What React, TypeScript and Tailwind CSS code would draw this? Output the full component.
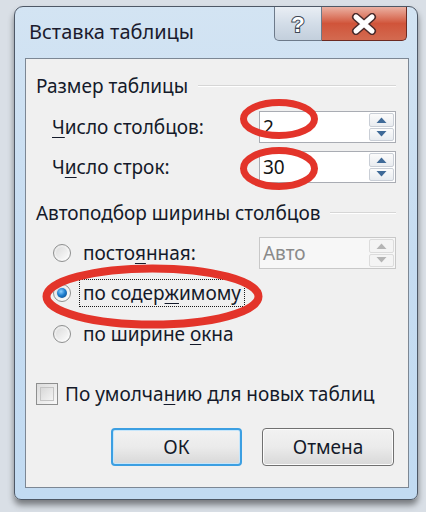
import React from "react";

const font = { fontFamily: '"Noto Sans", "Open Sans", sans-serif' };

function U({ children }: { children: React.ReactNode }) {
  return <span className="underline underline-offset-[3px] decoration-1">{children}</span>;
}

function SpinBox({ value, disabled }: { value: string; disabled?: boolean }) {
  return (
    <div
      className={`flex h-[32px] w-[137px] border ${
        disabled ? "border-[#c8c8c8] bg-[#f7f7f7]" : "border-[#a9acb3] bg-white"
      }`}
    >
      <div
        className={`flex-1 flex items-center pl-[3px] text-[19px] ${
          disabled ? "text-[#8a8a8a]" : "text-[#141414]"
        }`}
      >
        {value}
      </div>
      <div className="w-[27px] flex flex-col p-[1px] gap-[1px]">
        {[0, 1].map((i) => (
          <div
            key={i}
            className={`flex-1 flex items-center justify-center rounded-[2px] border ${
              disabled
                ? "border-[#dcdcdc] bg-[#f4f4f4]"
                : "border-[#c9ced6] bg-gradient-to-b from-[#fbfbfb] to-[#e9ecf0]"
            }`}
          >
            <svg width="11" height="6" viewBox="0 0 11 6">
              {i === 0 ? (
                <path d="M0.5 6 L5.5 0.5 L10.5 6 Z" fill={disabled ? "#b5b5b5" : "#3f6a98"} />
              ) : (
                <path d="M0.5 0 L5.5 5.5 L10.5 0 Z" fill={disabled ? "#b5b5b5" : "#3f6a98"} />
              )}
            </svg>
          </div>
        ))}
      </div>
    </div>
  );
}

function Radio({ checked }: { checked?: boolean }) {
  return (
    <div className="w-[18px] h-[18px] rounded-full border border-[#8e8f8f] bg-gradient-to-br from-[#e6e6e6] to-[#fdfdfd] flex items-center justify-center shrink-0">
      <div className="w-[12px] h-[12px] rounded-full bg-gradient-to-br from-[#dcdcdc] to-[#fafafa] flex items-center justify-center">
        {checked && (
          <div className="w-[10px] h-[10px] rounded-full bg-[radial-gradient(circle_at_40%_35%,#8fd0ff_0%,#1f7fcf_45%,#0b3d7a_100%)]" />
        )}
      </div>
    </div>
  );
}

function GroupLabel({ text }: { text: string }) {
  return (
    <div className="flex items-center h-[22px] pl-[10px] pr-[12px]">
      <span className="text-[19px] text-[#141a2a]">{text}</span>
      <div className="flex-1 ml-[10px] h-[2px] border-t border-[#d6d6d6] border-b border-b-white" />
    </div>
  );
}

export default function App() {
  return (
    <div
      className="relative w-[426px] h-[512px] bg-[#d9dfe6] pl-[14px] pt-[6px] pr-[8px] pb-[12px]"
      style={font}
    >
      <div className="h-full flex flex-col rounded-t-[9px] rounded-b-[7px] border border-[#4e5866] bg-gradient-to-b from-[#d3e4f3] via-[#c6dcf1] to-[#c2dbf2] shadow-[0_5px_6px_rgba(0,0,0,0.45)]">
        {/* title bar */}
        <div className="h-[51px] flex items-start shrink-0">
          <div className="pl-[14px] pt-[10px] text-[20px] text-[#1b1b2e]">Вставка таблицы</div>
          <div className="ml-auto mr-[10px] flex">
            <div className="w-[48px] h-[34px] rounded-bl-[5px] border border-t-0 border-[#6d7a8a] bg-gradient-to-b from-[#e9eef4] via-[#d3dde8] to-[#c3cfdc] flex items-center justify-center">
              <svg width="22" height="26" viewBox="0 0 22 26">
                <text
                  x="11"
                  y="21"
                  textAnchor="middle"
                  fontSize="22"
                  fontWeight="bold"
                  fontFamily="Liberation Sans, sans-serif"
                  fill="#ffffff"
                  stroke="#3c4654"
                  strokeWidth="2"
                  paintOrder="stroke"
                >
                  ?
                </text>
              </svg>
            </div>
            <div className="w-[85px] h-[34px] rounded-br-[5px] border border-t-0 border-l-0 border-[#6b2a22] bg-gradient-to-b from-[#eab0a2] via-[#d0543a] to-[#d36a50] flex items-center justify-center">
              <svg width="28" height="22" viewBox="0 0 28 22">
                <path d="M6 4 L22 18 M22 4 L6 18" stroke="#4a2a2a" strokeWidth="8" strokeLinecap="round" />
                <path d="M6 4 L22 18 M22 4 L6 18" stroke="#ffffff" strokeWidth="5" strokeLinecap="round" />
              </svg>
            </div>
          </div>
        </div>

        {/* client area */}
        <div className="flex-1 ml-[10px] mr-[8px] mb-[11px] border border-[#7c8794] bg-[#f0f0f0] flex flex-col text-[#141a2a]">
          <div className="mt-[16px]">
            <GroupLabel text="Размер таблицы" />
          </div>

          <div className="mt-[14px] flex items-center pl-[26px] pr-[12px]">
            <span className="text-[19px]">
              <U>Ч</U>исло столбцов:
            </span>
            <div className="ml-auto">
              <SpinBox value="2" />
            </div>
          </div>

          <div className="mt-[8px] flex items-center pl-[26px] pr-[12px]">
            <span className="text-[19px]">
              Ч<U>и</U>сло строк:
            </span>
            <div className="ml-auto">
              <SpinBox value="30" />
            </div>
          </div>

          <div className="mt-[19px]">
            <GroupLabel text="Автоподбор ширины столбцов" />
          </div>

          <div className="mt-[13px] flex items-center pl-[27px] pr-[12px]">
            <Radio />
            <span className="ml-[12px] text-[19px]">
              посто<U>я</U>нная:
            </span>
            <div className="ml-auto">
              <SpinBox value="Авто" disabled />
            </div>
          </div>

          <div className="mt-[10px] h-[28px] flex items-center pl-[27px]">
            <Radio checked />
            <span className="ml-[8px] h-[28px] px-[3px] flex items-center border border-dotted border-[#1a1a1a] text-[19px]">
              по содер<U>ж</U>имому
            </span>
          </div>

          <div className="mt-[13px] h-[28px] flex items-center pl-[27px]">
            <Radio />
            <span className="ml-[12px] text-[19px]">
              по ширине <U>о</U>кна
            </span>
          </div>

          <div className="mt-[34px] h-[24px] flex items-center pl-[10px]">
            <div className="w-[22px] h-[22px] border border-[#8e8f8f] bg-gradient-to-br from-[#dcdcdc] to-[#f8f8f8] p-[3px] shrink-0">
              <div className="w-full h-full border border-[#c4c4c4] bg-gradient-to-br from-[#d8d8d8] to-[#f4f4f4]" />
            </div>
            <span className="ml-[7px] text-[19px]">
              По умолча<U>н</U>ию для новых таблиц
            </span>
          </div>

          <div className="mt-[22px] flex justify-end gap-[20px] pr-[14px]">
            <button className="w-[131px] h-[38px] rounded-[4px] border-2 border-[#3c9fe2] bg-gradient-to-b from-[#f2f2f2] via-[#ebebeb] to-[#d8d8d8] text-[19px] text-[#141a2a] shadow-[inset_0_0_0_1px_#c6e6fb]">
              ОК
            </button>
            <button className="w-[132px] h-[38px] rounded-[4px] border border-[#707070] bg-gradient-to-b from-[#f2f2f2] via-[#ebebeb] to-[#d8d8d8] text-[19px] text-[#141a2a] shadow-[inset_0_0_0_1px_#fcfcfc]">
              Отмена
            </button>
          </div>
        </div>
      </div>

      {/* red annotation ellipses */}
      <svg className="absolute left-0 top-0 pointer-events-none" width="426" height="512">
        <ellipse cx="279" cy="119" rx="35.5" ry="16.5" fill="none" stroke="#e3342a" strokeWidth="7" />
        <ellipse cx="279" cy="168.5" rx="35.5" ry="18" fill="none" stroke="#e3342a" strokeWidth="7" />
        <ellipse cx="152.5" cy="296.5" rx="106" ry="28" fill="none" stroke="#e3342a" strokeWidth="8" />
      </svg>
    </div>
  );
}
